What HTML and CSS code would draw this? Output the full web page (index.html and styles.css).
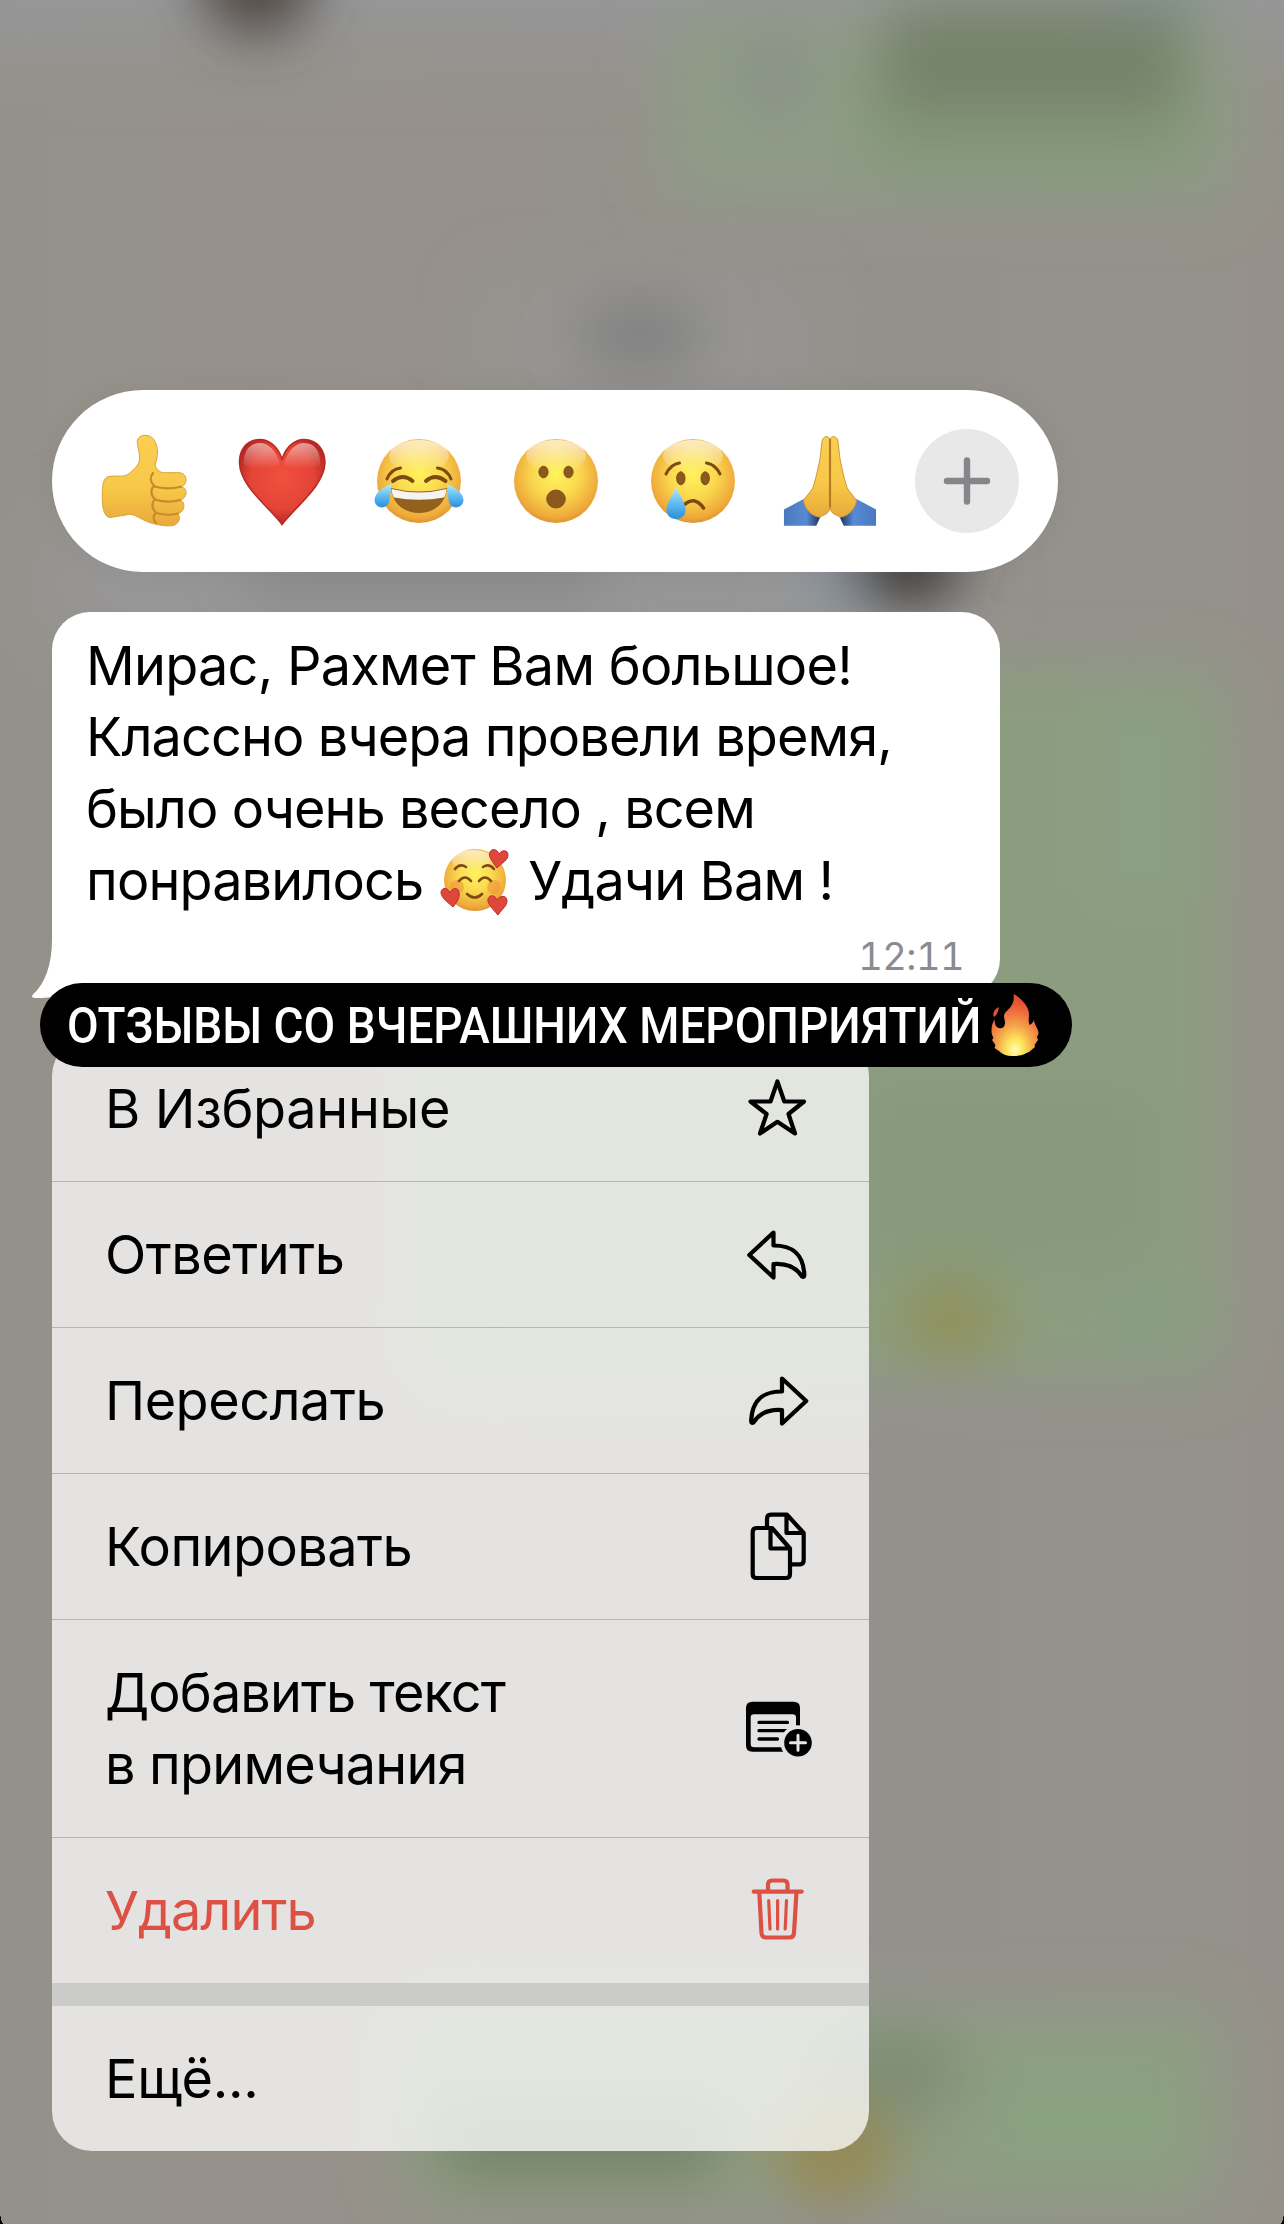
FILE: index.html
```html
<!DOCTYPE html>
<html lang="ru">
<head>
<meta charset="utf-8">
<title>Сообщение</title>
<link rel="stylesheet" href="styles.css">
</head>
<body>
<main class="screen">
  <svg class="backdrop" viewBox="0 0 1284 2224" aria-hidden="true">
    <defs>
      <linearGradient id="base" x1="0" x2="1" y1="0" y2="0">
        <stop offset="0" stop-color="#94918b"/><stop offset=".3" stop-color="#96918a"/><stop offset=".7" stop-color="#94918d"/><stop offset="1" stop-color="#95918a"/>
      </linearGradient>
      <filter id="b20" x="-100%" y="-100%" width="300%" height="300%"><feGaussianBlur stdDeviation="28"/></filter>
      <filter id="b34" x="-100%" y="-100%" width="300%" height="300%"><feGaussianBlur stdDeviation="40"/></filter>
    </defs>
    <rect width="1284" height="2224" fill="url(#base)"/>
    <g filter="url(#b34)">
      <rect x="-60" y="-100" width="1400" height="140" fill="#959799"/>
      <rect x="500" y="300" width="290" height="80" fill="#979797"/>
      <rect x="50" y="540" width="900" height="90" fill="#98989a"/>
    </g>
    <g filter="url(#b20)">
      <rect x="662" y="10" width="576" height="194" rx="40" fill="#8f9b86"/>
      <rect x="860" y="60" width="344" height="120" rx="30" fill="#85997a"/>
      <rect x="880" y="5" width="306" height="112" rx="30" fill="#76836a"/>
      <rect x="1120" y="-40" width="80" height="50" fill="#839393"/>
      <ellipse cx="775" cy="75" rx="28" ry="38" fill="#858d88"/>
      <ellipse cx="257" cy="-26" rx="56" ry="62" fill="#4d453f"/>
      <ellipse cx="640" cy="335" rx="64" ry="36" fill="#808080"/>
      <rect x="250" y="560" width="350" height="30" fill="#808081"/>
      <rect x="800" y="566" width="60" height="40" fill="#8795a3"/>
      <ellipse cx="906" cy="566" rx="56" ry="40" fill="#3c3734"/>
      <rect x="420" y="668" width="807" height="710" rx="44" fill="#8c9d7f"/>
      <rect x="1100" y="700" width="90" height="190" fill="#8a9f86"/>
      <rect x="860" y="1090" width="290" height="170" fill="#86997b"/>
      <rect x="1090" y="1280" width="100" height="80" fill="#889d84"/>
      <ellipse cx="950" cy="1318" rx="54" ry="42" fill="#8f9157"/>
      <rect x="400" y="2005" width="822" height="200" rx="40" fill="#8e9c82"/>
      <rect x="980" y="2060" width="210" height="110" fill="#8aa180"/>
      <ellipse cx="895" cy="2074" rx="72" ry="48" fill="#7f8d76"/>
      <rect x="440" y="2112" width="280" height="64" fill="#728265"/>
      <ellipse cx="835" cy="2150" rx="64" ry="52" fill="#948a52"/>
    </g>
  </svg>

  <div class="content">
    <div class="reactions">
      <svg class="emoji" viewBox="0 0 96 96">
        <defs>
          <radialGradient id="face" cx=".5" cy=".42" r=".6"><stop offset="0" stop-color="#fef35c"/><stop offset=".45" stop-color="#fbd94f"/><stop offset=".85" stop-color="#eeaa3b"/><stop offset="1" stop-color="#dc8f2c"/></radialGradient>
          <linearGradient id="shine" x1="0" x2="0" y1="0" y2="1"><stop offset="0" stop-color="#fff" stop-opacity=".7"/><stop offset="1" stop-color="#fff" stop-opacity="0"/></linearGradient>
          <linearGradient id="hand" x1="0" x2="0" y1="0" y2="1"><stop offset="0" stop-color="#fbcf52"/><stop offset=".6" stop-color="#f7c748"/><stop offset="1" stop-color="#e9a93b"/></linearGradient>
          <linearGradient id="tear" x1="0" x2="0" y1="0" y2="1"><stop offset="0" stop-color="#b9ecfb"/><stop offset=".5" stop-color="#62bdf3"/><stop offset="1" stop-color="#2a8fdc"/></linearGradient>
          <radialGradient id="heart" cx=".5" cy=".45" r=".62"><stop offset="0" stop-color="#f2503f"/><stop offset=".6" stop-color="#e34436"/><stop offset="1" stop-color="#a41d1a"/></radialGradient>
        </defs>
        <path fill="url(#hand)" stroke="#dfa23a" stroke-width="1" d="M11 43.7C17 42 24 44.500 30 42C36 38 43 31 42.500 26C43 17 38 8 41.500 5C45 1 53 1.500 56.500 6C62 14 61 24 58 32C59 36 62 39 66 39.700H82C91 40 91 52 84 53.700C91 55 91 65 83 67C89 69 88 79 81 80.500C84 85 82 91 76 92.500C68 94 58 91 53 89.700C44 87 36 79 29 82L13 84.500C7 84 5 74 5.300 63.700C5 54 6 45 11 43.700Z"/>
        <g fill="none" stroke="#c88a2b" stroke-width="2.200" stroke-linecap="round"><path d="M56 40C53 44 53 49 57 52.500C53 56 54 63 58 66C54 70 55 76 59 79.500C56 83 56 87 59 90M57 53.500C66 56 76 55.500 84 53.700M58 66.500C66 69 76 69 83 67M59 80C66 82 75 82 81 80.500"/></g>
      </svg>
      <svg class="emoji" viewBox="0 0 96 96">
        <path fill="url(#heart)" stroke="#b62a24" stroke-width="1.500" d="M48 26C43 11 33 6.500 26 6.500C12 6.500 5 18 5.500 30C6 53 34 73 48 91.500C62 73 90 53 91 30C91 18 84 6.500 70 6.500C63 6.500 53 11 48 26Z"/>
        <path fill="url(#shine)" opacity=".75" d="M46 31C42 17 34 10 26 10C14 10 9 20 10 33C20 36 35 37 46 31ZM50 31C54 17 62 10 70 10C82 10 87 20 86 33C76 36 61 37 50 31Z"/>
      </svg>
      <svg class="emoji" viewBox="0 0 96 96">
        <circle cx="48" cy="48" r="42" fill="url(#face)"/><ellipse cx="48" cy="23" rx="30" ry="16" fill="url(#shine)"/>
        <g fill="none" stroke="#7d4a10" stroke-linecap="round"><path stroke-width="3" d="M16 46Q20 36 29.500 35M80 46Q76 36 66.500 35"/><path stroke-width="4" d="M22 48Q32 40 41.500 48M55 48Q64 40 74.500 48"/></g>
        <path fill="#93601d" d="M20 55Q48 62 76 55C75 71 62 80 48 80S21 71 20 55Z"/><path fill="#f5f4f3" d="M20.500 56Q48 63 75.500 56Q75 62 73 64.500Q48 69 23 64.500Q21 62 20.500 56Z"/>
        <path fill="url(#tear)" d="M20 51C13 54 4 59 3.500 67C4 76 16 77 18 69C19 63 20 58 20 51ZM76 51C83 54 92 59 92.500 67C92 76 80 77 78 69C77 63 76 58 76 51Z"/>
      </svg>
      <svg class="emoji" viewBox="0 0 96 96">
        <circle cx="48" cy="48" r="42" fill="url(#face)"/><ellipse cx="48" cy="23" rx="30" ry="16" fill="url(#shine)"/>
        <g fill="#8d581c" stroke="#80501a"><ellipse cx="35.500" cy="39" rx="4.600" ry="5.800"/><ellipse cx="60.500" cy="39" rx="4.600" ry="5.800"/><ellipse cx="48" cy="66" rx="9.300" ry="9"/></g>
      </svg>
      <svg class="emoji" viewBox="0 0 96 96">
        <circle cx="48" cy="48" r="42" fill="url(#face)"/><ellipse cx="48" cy="23" rx="30" ry="16" fill="url(#shine)"/>
        <g fill="#8d581c" stroke="#80501a"><ellipse cx="35.800" cy="45.300" rx="4.200" ry="6.500"/><ellipse cx="60.200" cy="45.300" rx="4.200" ry="6.500"/></g>
        <g fill="none" stroke="#7d4a10" stroke-width="3" stroke-linecap="round"><path d="M21 41Q26 31 34.500 30M75 41Q70 31 61.500 30"/><path d="M40 71Q50 63 58.500 75" stroke-width="3.600"/></g>
        <path fill="url(#tear)" d="M31 53.500C28 62 21.500 70 21.500 77C21.500 89 40.500 89 40.500 77C40.500 70 34 62 31 53.500Z"/>
      </svg>
      <svg class="emoji" viewBox="0 0 98 96">
        <defs><linearGradient id="cuff" x1="0" x2="1"><stop offset="0" stop-color="#4a78bd"/><stop offset=".6" stop-color="#568bd4"/><stop offset="1" stop-color="#182c58"/></linearGradient></defs>
        <g id="palm"><path fill="url(#cuff)" d="M2 77L22 66.500L40 83L35 93.700H2Z"/><path fill="url(#hand)" stroke="#d0922f" stroke-width="1" d="M49 5C47 1.500 42 2 41 7C39.500 17 39.500 25 37 34C35 43 33.500 49 31.500 55C28 61 24 64 22 68C23 76 30 84 38.500 85C43 82 48 82 49 75Z"/></g>
        <use href="#palm" transform="matrix(-1 0 0 1 98 0)"/>
        <path d="M49 5V75" stroke="#b77a24" stroke-width="2.200"/>
      </svg>
      <svg class="more" viewBox="0 0 104 104"><circle cx="52" cy="52" r="52" fill="#e8e8e8"/><path d="M32 52H72M52 31.500V72.500" stroke="#85858a" stroke-width="6.400" stroke-linecap="round"/></svg>
    </div>

    <div class="bubble">
      <svg class="tail" viewBox="0 0 50 70"><path fill="#fff" d="M20 0C20 26 13 45 .5 56C-.5 58 .5 59 3 59C22 59 34 57 50 48V0Z"/></svg>
      <p class="message">
        <span class="l1">Мирас, Рахмет Вам большое!</span><br>
        <span class="l2">Классно вчера провели время,</span><br>
        <span class="l3">было очень весело , всем</span><br>
        <span class="l4"><span>понравилось</span><svg class="inline-emoji" viewBox="0 0 70 72">
          <circle cx="35" cy="34" r="31" fill="url(#face)"/><ellipse cx="33" cy="15" rx="21" ry="11" fill="url(#shine)"/>
          <circle cx="17" cy="41" r="7" fill="#f08b3a" opacity=".5"/><circle cx="54" cy="41" r="7" fill="#f08b3a" opacity=".5"/>
          <g fill="none" stroke="#7d4a10" stroke-width="2.600" stroke-linecap="round"><path d="M15 23Q20 17 26 21M43 21Q49 17 54 23M19 35Q25 28 31 35M39 35Q45 28 51 35M27 48Q35 55 42 48"/></g>
          <g fill="#df473d" stroke="#bb3029"><path d="M57 22C51 14 48 10 50 6C52 2 57 3 59 8C62 3 68 4 68 9C68 14 62 17 57 22Z"/><path d="M13 61C6 55 1 51 1 46C2 41 8 41 10 47C12 41 19 41 19 47C20 52 17 56 13 61Z"/><path d="M58 69C51 61 47 57 48 53C50 48 55 49 57 54C60 49 67 49 67 55C67 60 62 63 58 69Z"/></g>
        </svg><span>Удачи Вам !</span></span>
      </p>
      <time class="time">12:11</time>
    </div>

    <div class="sticker"><span class="sticker-text">ОТЗЫВЫ СО ВЧЕРАШНИХ МЕРОПРИЯТИЙ</span>
      <svg class="flame" viewBox="0 0 52 66"><defs><radialGradient id="fire" cx=".5" cy=".9" r=".8"><stop offset="0" stop-color="#fffdb8"/><stop offset=".22" stop-color="#fde45a"/><stop offset=".5" stop-color="#f5a24a"/><stop offset=".8" stop-color="#ee6a3c"/><stop offset="1" stop-color="#e4502f"/></radialGradient></defs>
      <path fill="url(#fire)" d="M24.600 2C32 6 40 14 40 22C40 26 39 29 40.500 33C43 32 44.500 30 45 27.500C45 33 49 35 49.600 41.500L48 45L49 48L45.500 53L46 55L40 60Q32 64.500 24.600 64Q15 64.500 10 59L5.500 56L6.500 53L3 48L4.500 46C1 40 2.500 33 5.500 27C5.500 32 7 35.500 10 36Q13.500 37 15 34.500C18 29 13 25 16 21C19 17 26 14 24.600 2Z"/><path fill="#e2502f" d="M10 15C5 17 3 22 5 25C8 23 9 20 10 15Z"/></svg>
    </div>

    <nav class="menu">
      <div class="row"><span class="m1">В Избранные</span><svg class="icon" viewBox="0 0 70 70"><path d="M35.400 8.500L42.300 28.500H62L46.500 41L53 60.500L35.400 48.800L18 60.500L24.600 41L8.500 28.500H28.500Z"/></svg></div>
      <div class="row"><span class="m2">Ответить</span><svg class="icon" viewBox="0 0 70 70"><path id="reply" d="M31.500 13.500L7.300 36L31.500 58.500V45C45 44 54 48 60 57.500Q62.500 59 62.300 55C61 34 50 26.500 31.500 26.500Z"/></svg></div>
      <div class="row"><span class="m3">Переслать</span><svg class="icon" viewBox="0 0 70 70"><use href="#reply" transform="matrix(-1 0 0 1 71.500 0)"/></svg></div>
      <div class="row"><span class="m4">Копировать</span><svg class="icon" viewBox="0 0 70 70"><path d="M14.500 17H30L48 37.500V63Q48 67 44 67H14.500Q10.700 67 10.700 63V21Q10.700 17 14.500 17ZM28.500 17V37.500H48M25 17V8Q25 3.700 29 3.700H45L61.700 22V49Q61.700 53.300 58 53.300H48M44.500 3.700V22H61.700"/></svg></div>
      <div class="row tall"><span><span class="m5">Добавить текст</span><br><span class="m6">в примечания</span></span><svg class="icon solid" viewBox="0 0 70 70"><defs><mask id="cut"><path fill="#fff" d="M0 0H70V70H0Z"/><circle cx="56" cy="49.700" r="17.500" fill="#000"/></mask></defs><g mask="url(#cut)"><path fill-rule="evenodd" d="M10.500 8.700H51.500Q58 8.700 58 15V52.500Q58 58.700 51.500 58.700H10.500Q4 58.700 4 52.500V15Q4 8.700 10.500 8.700ZM12 21.300Q8.700 21.300 8.700 24.500V51Q8.700 54.300 12 54.300H50.500Q54 54.300 54 51V24.500Q54 21.300 50.500 21.300Z"/><path class="line" d="M17 29.400H45.500M17 37.700H45.500M17 46H35.500"/></g><circle cx="56" cy="49.700" r="13.800"/><path class="plus" d="M48.500 49.700H63.500M56 42.200V57.200"/></svg></div>
      <div class="row danger"><span class="m7">Удалить</span><svg class="icon" viewBox="0 0 70 70"><path d="M11.700 16.600H59.700M26 16V9.500Q26 5.500 30 5.500H41.500Q45.500 5.500 45.500 9.500V16M17.300 17L19.500 58Q19.800 62.500 24 62.500H47.500Q51.700 62.500 52 58L54.500 17"/><path class="thin" d="M26.700 25.500L28 54M35.600 25.500V54M44.500 25.500L43.200 54"/></svg></div>
      <div class="gap"></div>
      <div class="row last"><span class="m8">Ещё...</span></div>
    </nav>
  </div>
  <i class="corner left"></i><i class="corner right"></i>
</main>
</body>
</html>
```
FILE: styles.css
```css
* { box-sizing: border-box; }
body { margin: 0; background: #000; }
.screen {
  position: relative;
  width: 1284px;
  height: 2224px;
  overflow: hidden;
  font-family: Inter, "Liberation Sans", sans-serif;
  font-size: 54px;
  line-height: 71.8px;
  color: #000;
}
.backdrop { position: absolute; inset: 0; width: 1284px; height: 2224px; }
.content { position: relative; padding: 390px 0 0 52px; }
.reactions {
  display: grid;
  grid-template-columns: repeat(7, 137px);
  place-items: center;
  width: 1006px;
  height: 182px;
  padding: 0 23px 0 24px;
  border-radius: 91px;
  background: #fff;
  box-shadow: 0 0 30px rgba(0, 0, 0, .04);
}
.emoji { width: 96px; height: 96px; }
.more { width: 104px; height: 104px; fill: none; }
.bubble {
  position: relative;
  display: flex;
  flex-direction: column;
  width: 948px;
  height: 385px;
  margin-top: 40px;
  padding: 17.500px 36px 0 34px;
  border-radius: 38px;
  background: #fff;
}
.tail { position: absolute; left: -20px; bottom: -12px; width: 50px; height: 70px; }
.message { position: relative; height: 287.200px; margin: 0; white-space: nowrap; }
.l1 { letter-spacing: -.76px; }
.l2 { letter-spacing: -.88px; }
.l3 { letter-spacing: -.94px; }
.l4 { letter-spacing: -.87px; }
.inline-emoji { display: inline-block; width: 70px; height: 72px; margin: -10px 18px -10px 17px; vertical-align: -8px; }
.time { align-self: flex-end; margin-top: 8px; font-size: 38px; line-height: 62px; letter-spacing: -.6px; font-feature-settings: "tnum"; color: #8b8b90; }
.sticker {
  position: absolute;
  z-index: 2;
  left: 40px;
  top: 983px;
  display: flex;
  align-items: center;
  width: 1032px;
  height: 84px;
  padding-left: 27px;
  border-radius: 42px;
  background: #000;
  color: #fff;
}
.sticker-text { width: 922px; padding-top: 2px; font: 500 50px/84px Roboto, sans-serif; white-space: nowrap; transform: scaleX(.919); transform-origin: 0 50%; }
.flame { width: 52px; height: 66px; flex: none; margin-top: -1px; }
.menu {
  width: 817px;
  height: 1115px;
  margin-top: 39px;
  border-radius: 40px;
  overflow: hidden;
  background: rgba(252, 252, 251, .77);
}
.row {
  display: flex;
  align-items: center;
  justify-content: space-between;
  height: 146px;
  padding: 1px 57px 0 53px;
  border-bottom: 1.500px solid rgba(60, 62, 60, .28);
  white-space: nowrap;
}
.tall { height: 218px; }
.danger { height: 145px; border-bottom: 0; color: #dd5145; }
.last { height: 145px; border-bottom: 0; }
.gap { height: 23px; background: rgba(60, 60, 60, .14); }
.m1 { letter-spacing: -.35px; }
.m2, .m3 { letter-spacing: -.5px; }
.m4 { letter-spacing: -.55px; }
.m5 { letter-spacing: -.9px; }
.m6 { letter-spacing: -.8px; }
.m7 { letter-spacing: -.95px; }
.m8 { letter-spacing: -.3px; }
.icon { width: 70px; height: 70px; margin-top: -2px; fill: none; stroke: currentColor; stroke-width: 4.200px; stroke-linecap: round; stroke-linejoin: round; overflow: visible; }
.solid { fill: #000; stroke: none; }
.line { stroke: #000; stroke-width: 3.300px; }
.plus { stroke: #e6e6e3; stroke-width: 3px; }
.thin { stroke-width: 3.200px; }
.corner { position: absolute; bottom: 0; width: 4px; height: 14px; }
.left { left: 0; background: radial-gradient(ellipse 4px 14px at 100% 0, transparent 97%, #000); }
.right { right: 0; background: radial-gradient(ellipse 4px 14px at 0 0, transparent 97%, #000); }
```
